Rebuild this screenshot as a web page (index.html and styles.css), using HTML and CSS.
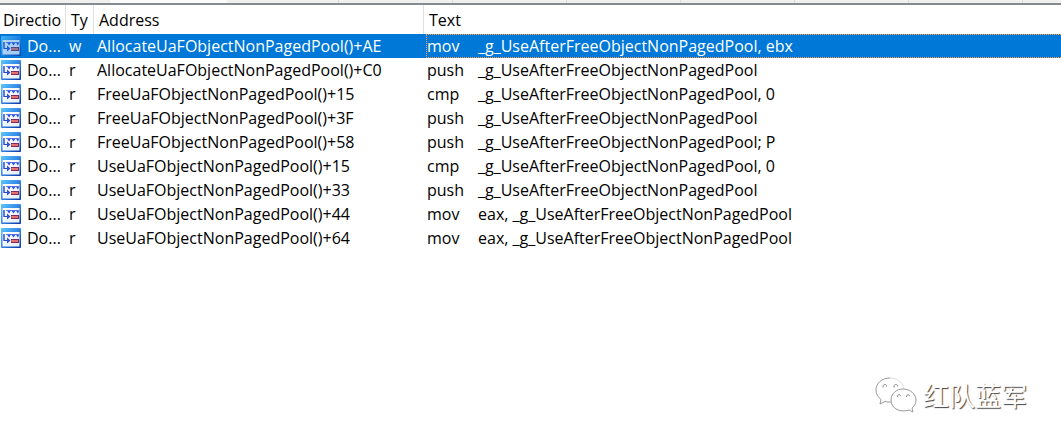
FILE: index.html
```html
<!DOCTYPE html>
<html lang="en">
<head>
<meta charset="utf-8">
<title>Cross references</title>
<link rel="stylesheet" href="styles.css">
</head>
<body>
<svg class="defs" aria-hidden="true">
  <defs>
    <linearGradient id="frame" x1="0" y1="0" x2="1" y2="1">
      <stop offset="0" stop-color="#5cc8f8"/>
      <stop offset="0.5" stop-color="#3086e8"/>
      <stop offset="1" stop-color="#0a2d9c"/>
    </linearGradient>
    <linearGradient id="pane" x1="0" y1="0" x2="1" y2="1">
      <stop offset="0" stop-color="#ffffff"/>
      <stop offset="1" stop-color="#e2eefc"/>
    </linearGradient>
    <symbol id="xref" viewBox="0 0 20 20">
      <rect width="20" height="20" rx="1" fill="url(#frame)"/>
      <rect x="1.500" y="4" width="17" height="14.500" fill="url(#pane)"/>
      <path d="M3 6v6.500h4M5 6.500h12.500" fill="none" stroke="#6f8cf0" stroke-width="1"/>
      <path d="M3 6v6.500h4" fill="none" stroke="#2a48dc" stroke-width="1.200"/>
      <path d="M6 9.500l3.500 3-3.500 3zM6 6.500h4l-2 3zM10.500 6.500h4l-2 3zM15 6.500h3.500l-1.700 3z" fill="#2f50e4"/>
      <rect x="10" y="11" width="8" height="4" fill="#7c2c60"/>
      <rect x="10" y="12" width="7" height="2" fill="#e0706a"/>
    </symbol>
  </defs>
</svg>
<main class="window">
  <div class="tabstrip"><div class="tab-active"></div><div class="tab-rest"></div></div>
  <table class="xrefs">
    <colgroup><col class="c-dir"><col class="c-type"><col class="c-addr"><col></colgroup>
    <thead><tr><th>Directio</th><th>Ty</th><th>Address</th><th>Text</th></tr></thead>
    <tbody>
      <tr class="selected"><td><div class="dir"><svg class="icon"><use href="#xref"/></svg>Do...</div></td><td>w</td><td>AllocateUaFObjectNonPagedPool()+AE</td><td class="focus"><div class="code"><span class="op">mov</span><span>_g_UseAfterFreeObjectNonPagedPool, ebx</span></div></td></tr>
      <tr><td><div class="dir"><svg class="icon"><use href="#xref"/></svg>Do...</div></td><td>r</td><td>AllocateUaFObjectNonPagedPool()+C0</td><td><div class="code"><span class="op">push</span><span>_g_UseAfterFreeObjectNonPagedPool</span></div></td></tr>
      <tr><td><div class="dir"><svg class="icon"><use href="#xref"/></svg>Do...</div></td><td>r</td><td>FreeUaFObjectNonPagedPool()+15</td><td><div class="code"><span class="op">cmp</span><span>_g_UseAfterFreeObjectNonPagedPool, 0</span></div></td></tr>
      <tr><td><div class="dir"><svg class="icon"><use href="#xref"/></svg>Do...</div></td><td>r</td><td>FreeUaFObjectNonPagedPool()+3F</td><td><div class="code"><span class="op">push</span><span>_g_UseAfterFreeObjectNonPagedPool</span></div></td></tr>
      <tr><td><div class="dir"><svg class="icon"><use href="#xref"/></svg>Do...</div></td><td>r</td><td>FreeUaFObjectNonPagedPool()+58</td><td><div class="code"><span class="op">push</span><span>_g_UseAfterFreeObjectNonPagedPool; P</span></div></td></tr>
      <tr><td><div class="dir"><svg class="icon"><use href="#xref"/></svg>Do...</div></td><td>r</td><td>UseUaFObjectNonPagedPool()+15</td><td><div class="code"><span class="op">cmp</span><span>_g_UseAfterFreeObjectNonPagedPool, 0</span></div></td></tr>
      <tr><td><div class="dir"><svg class="icon"><use href="#xref"/></svg>Do...</div></td><td>r</td><td>UseUaFObjectNonPagedPool()+33</td><td><div class="code"><span class="op">push</span><span>_g_UseAfterFreeObjectNonPagedPool</span></div></td></tr>
      <tr><td><div class="dir"><svg class="icon"><use href="#xref"/></svg>Do...</div></td><td>r</td><td>UseUaFObjectNonPagedPool()+44</td><td><div class="code"><span class="op">mov</span><span>eax, _g_UseAfterFreeObjectNonPagedPool</span></div></td></tr>
      <tr><td><div class="dir"><svg class="icon"><use href="#xref"/></svg>Do...</div></td><td>r</td><td>UseUaFObjectNonPagedPool()+64</td><td><div class="code"><span class="op">mov</span><span>eax, _g_UseAfterFreeObjectNonPagedPool</span></div></td></tr>
    </tbody>
  </table>
  <div class="watermark" lang="zh-CN">
    <svg class="wechat" viewBox="0 0 42 36" aria-hidden="true">
      <path d="M15 1C7 1 1 6 1 13c0 4 2 7 5 9.500L5 27l5-2.500c2 .5 4 .8 6 .6" class="outline"/>
      <path d="M15 1c7 0 13 4 14 11" class="outline faint"/>
      <path d="M28 12c7 0 13 5 13 11 0 4-2 6-4 8l1 4-4-2c-8 3-18-1-18-10 0-6 5-11 12-11z" class="outline"/>
      <path d="M8 10.500c-.5-4 4-4 3.500-1M19 10.500c-.5-4 4-4 3.500-1M22.500 20c-.3-3 3-3 3-.8M31.500 20c-.3-3 3-3 3-.8" class="eyes"/>
    </svg>
    <span>红队蓝军</span>
  </div>
</main>
</body>
</html>
```
FILE: styles.css
```css
* { box-sizing: border-box; }
body {
  margin: 0;
  background: #fff;
  color: #000;
  font: 16px/24px "Open Sans", "Noto Sans CJK SC", sans-serif;
}
.defs { position: absolute; width: 0; height: 0; }
.window { position: relative; min-height: 100vh; overflow: hidden; }
.tabstrip {
  display: flex;
  height: 5px;
  background: #f0f0f0;
  border-bottom: 2px solid #868a91;
}
.tab-active { width: 117px; margin-left: 110px; background: #fafafa; }
.tab-rest {
  flex: 1;
  background: repeating-linear-gradient(90deg, transparent 0 111px, #dcdcdc 111px 112px, transparent 112px 114px);
}
.xrefs { width: 100%; table-layout: fixed; border-collapse: separate; border-spacing: 0; }
.c-dir { width: 66px; }
.c-type { width: 28px; }
.c-addr { width: 330px; }
th {
  height: 29px;
  padding: 0 0 0 5px;
  border-right: 1px solid #e0e0e0;
  font-weight: 400;
  text-align: left;
  white-space: nowrap;
}
th:first-child { padding-left: 3px; }
th:last-child { border-right: 0; }
td { height: 24px; padding: 0 0 0 3px; white-space: nowrap; }
td:first-child { padding-left: 1px; }
.dir { display: flex; align-items: center; gap: 6px; }
.icon { width: 20px; height: 20px; flex: none; }
.code { display: flex; height: 24px; }
.op { width: 51px; }
.selected { background: #0078d7; color: #fff; }
.selected .icon { opacity: 0.7; }
td.focus { padding-left: 2px; }
.focus .code {
  border: 1px dotted #ff9a45;
  border-right: 0;
  line-height: 22px;
}
.watermark {
  position: absolute;
  right: 34px;
  bottom: 29px;
  display: flex;
  align-items: center;
  gap: 6px;
  color: #fff;
  font: 26px/40px "Noto Sans CJK SC", sans-serif;
  text-shadow: 1px 1px 1px #444;
}
.wechat { width: 42px; height: 36px; }
.outline { fill: #fff; stroke: #999; stroke-width: 1; }
.faint { stroke: #ddd; }
.eyes { fill: none; stroke: #888; }
```
